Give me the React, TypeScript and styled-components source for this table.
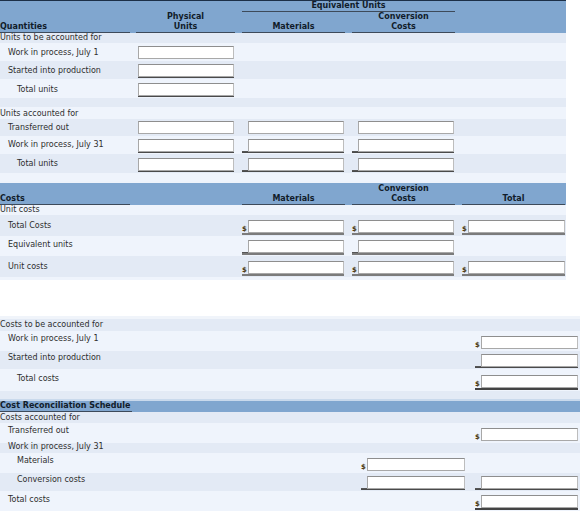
import React from "react";
import styled, { createGlobalStyle } from "styled-components";

const Global = createGlobalStyle`
  html, body { margin: 0; padding: 0; background: #ffffff; }
  body { font-family: "DejaVu Sans", Verdana, sans-serif; font-size: 8px; color: #2b2b2b; }
`;

const BLUE = "#80a6cf";
const DARK = "#e3eaf5";
const LIGHT = "#eff4fc";

const C1 = "136px 106px 110px 110px 104px";
const C3 = "359px 114px 107px";

type Tone = "dark" | "light" | "white";
const toneColor = (t: Tone) => (t === "dark" ? DARK : t === "light" ? LIGHT : "#ffffff");

const Page = styled.div`
  display: flex;
  flex-direction: column;
`;

const Section = styled.section<{ $w: number }>`
  width: ${(p) => p.$w}px;
  display: flex;
  flex-direction: column;
`;

const Strip = styled.div<{ $h: number; $c?: string }>`
  height: ${(p) => p.$h}px;
  background: ${(p) => p.$c ?? "#e6edf7"};
`;

const Head = styled.div<{ $cols: string; $rows: string; $top?: boolean }>`
  display: grid;
  grid-template-columns: ${(p) => p.$cols};
  grid-template-rows: ${(p) => p.$rows};
  background: ${BLUE};
  border-top: ${(p) => (p.$top ? "1px solid #1c2f47" : "none")};
  font-weight: bold;
  color: #111c2a;
  line-height: 10px;
`;

const HeadCell = styled.div<{ $col: string; $row?: string; $center?: boolean; $trim?: number; $line?: boolean }>`
  grid-column: ${(p) => p.$col};
  grid-row: ${(p) => p.$row ?? "auto"};
  align-self: end;
  text-align: ${(p) => (p.$center ? "center" : "left")};
  margin-right: ${(p) => p.$trim ?? 0}px;
  border-bottom: ${(p) => (p.$line === false ? "none" : "1px solid #3d4a5a")};
  white-space: nowrap;
`;

const Row = styled.div<{ $cols: string; $h: number; $tone: Tone }>`
  display: grid;
  grid-template-columns: ${(p) => p.$cols};
  height: ${(p) => p.$h}px;
  background: ${(p) => toneColor(p.$tone)};
  align-items: center;
`;

const Label = styled.div<{ $indent?: number; $lift?: number }>`
  padding-left: ${(p) => p.$indent ?? 0}px;
  line-height: 10px;
  white-space: nowrap;
  position: relative;
  top: ${(p) => -(p.$lift ?? 0)}px;
  color: #2e2e2e;
`;

type Line = "none" | "thin" | "thick" | "double";

const lineCss = (l: Line) =>
  l === "thin"
    ? "border-bottom: 1px solid #4a4a4a;"
    : l === "thick"
    ? "border-bottom: 2px solid #7b7b7b;"
    : l === "double"
    ? "border-bottom: 2px solid #444;"
    : "border-bottom: 1px solid transparent;";

const Field = styled.div<{ $pad?: number; $line: Line; $col?: string }>`
  grid-column: ${(p) => p.$col ?? "auto"};
  display: flex;
  align-items: flex-end;
  align-self: end;
  margin-bottom: 1px;
  margin-left: ${(p) => p.$pad ?? 0}px;
  width: max-content;
  ${(p) => lineCss(p.$line)}
`;

const Prefix = styled.span<{ $kind: "$" | "_" }>`
  width: 6px;
  height: 13px;
  box-sizing: border-box;
  font-size: 7px;
  font-weight: bold;
  line-height: 8px;
  color: #4d3c12;
  display: flex;
  align-items: flex-end;
  ${(p) => (p.$kind === "_" ? "border-bottom: 1px solid #555;" : "")}
`;

const Box = styled.div<{ $w: number }>`
  width: ${(p) => p.$w}px;
  height: 13px;
  box-sizing: border-box;
  background: #ffffff;
  border: 1px solid #a8a8a8;
  border-top-color: #8e8e8e;
  border-right-color: #bdbdbd;
`;

const Gap = styled.div<{ $h: number }>`
  height: ${(p) => p.$h}px;
`;

type Cell = { col: string; pre?: "$" | "_"; line?: Line; pad?: number; w?: number } | null;

const F: React.FC<{ c: NonNullable<Cell> }> = ({ c }) => (
  <Field $col={c.col} $pad={c.pad} $line={c.line ?? "none"}>
    {c.pre && <Prefix $kind={c.pre}>{c.pre === "$" ? "$" : ""}</Prefix>}
    <Box $w={c.w ?? 96} />
  </Field>
);

type RowDef = { label?: string; indent?: number; h: number; tone: Tone; cells?: Cell[]; lift?: number };

const Rows: React.FC<{ cols: string; rows: RowDef[] }> = ({ cols, rows }) => (
  <>
    {rows.map((r, i) => (
      <Row key={i} $cols={cols} $h={r.h} $tone={r.tone}>
        <Label $indent={r.indent} $lift={r.lift}>{r.label ?? ""}</Label>
        {(r.cells ?? []).map((c, j) => (c ? <F key={j} c={c} /> : null))}
      </Row>
    ))}
  </>
);

const phys = (line: Line = "none"): Cell => ({ col: "2", pad: 2, line });
const mat = (pre?: "$" | "_", line: Line = "none"): Cell => ({ col: "3", pre, line, pad: pre ? 0 : 6, w: 96 });
const conv = (pre?: "$" | "_", line: Line = "none"): Cell => ({ col: "4", pre, line, pad: pre ? 0 : 6, w: 96 });
const tot = (pre?: "$" | "_", line: Line = "none"): Cell => ({ col: "5", pre, line, w: 97 });

const sec1: RowDef[] = [
  { label: "Units to be accounted for", h: 10, tone: "dark" },
  { label: "Work in process, July 1", indent: 8, h: 18, tone: "light", cells: [phys()], lift: -1 },
  { label: "Started into production", indent: 8, h: 18, tone: "dark", cells: [phys("thin")], lift: -1 },
  { label: "Total units", indent: 17, h: 19, tone: "light", cells: [phys("thin")], lift: -1 },
  { h: 9, tone: "dark" },
  { label: "Units accounted for", h: 12, tone: "light", lift: -1 },
  { label: "Transferred out", indent: 8, h: 17, tone: "dark", cells: [phys(), mat(), conv()], lift: 0 },
  { label: "Work in process, July 31", indent: 8, h: 18, tone: "light", cells: [phys("thin"), mat("_", "thin"), conv("_", "thin")], lift: 0 },
  { label: "Total units", indent: 17, h: 19, tone: "dark", cells: [phys("thin"), mat("_", "thin"), conv("_", "thin")], lift: 0 },
  { h: 8, tone: "light" },
];

const sec2: RowDef[] = [
  { label: "Unit costs", h: 10, tone: "light", lift: 0 },
  { label: "Total Costs", indent: 8, h: 21, tone: "dark", cells: [mat("$", "thick"), conv("$", "thick"), tot("$", "thick")], lift: 0 },
  { label: "Equivalent units", indent: 8, h: 20, tone: "light", cells: [mat("_", "thick"), conv("_", "thick")], lift: 1 },
  { label: "Unit costs", indent: 8, h: 21, tone: "dark", cells: [mat("$", "thick"), conv("$", "thick"), tot("$", "thick")], lift: 0 },
  { h: 3, tone: "light" },
];

const colA = (pre?: "$" | "_", line: Line = "none"): Cell => ({ col: "2", pre, line, pad: 2, w: 98 });
const colB = (pre?: "$" | "_", line: Line = "none"): Cell => ({ col: "3", pre, line, pad: 2, w: 97 });

const sec3a: RowDef[] = [
  { label: "Costs to be accounted for", h: 12, tone: "dark" },
  { label: "Work in process, July 1", indent: 8, h: 20, tone: "light", cells: [colB("$")], lift: 2 },
  { label: "Started into production", indent: 8, h: 18, tone: "dark", cells: [colB("_", "thin")], lift: 2 },
  { label: "Total costs", indent: 17, h: 22, tone: "light", cells: [colB("$", "double")], lift: 1 },
  { h: 8, tone: "dark" },
];

const sec3b: RowDef[] = [
  { label: "Costs accounted for", h: 11, tone: "dark", lift: 0 },
  { label: "Transferred out", indent: 8, h: 20, tone: "light", cells: [colB("$")], lift: 2 },
  { label: "Work in process, July 31", indent: 8, h: 10, tone: "dark", lift: 1 },
  { label: "Materials", indent: 17, h: 20, tone: "light", cells: [colA("$")], lift: 2 },
  { label: "Conversion costs", indent: 17, h: 18, tone: "dark", cells: [colA("_", "thin"), colB("_", "thin")], lift: 2 },
  { label: "Total costs", indent: 8, h: 20, tone: "light", cells: [colB("$", "double")], lift: 1 },
];

export default function App() {
  return (
    <Page>
      <Global />
      <Section $w={566}>
        <Head $cols={C1} $rows="11px 21px" $top>
          <HeadCell $col="3 / 5" $row="1" $center $trim={7}>Equivalent Units</HeadCell>
          <HeadCell $col="1" $row="2" $trim={6}>Quantities</HeadCell>
          <HeadCell $col="2" $row="2" $center $trim={7}>Physical<br />Units</HeadCell>
          <HeadCell $col="3" $row="2" $center $trim={7}>Materials</HeadCell>
          <HeadCell $col="4" $row="2" $center $trim={7}>Conversion<br />Costs</HeadCell>
        </Head>
        <Rows cols={C1} rows={sec1} />
      </Section>
      <Section $w={566}>
        <Strip $h={2} $c="#eef3fb" />
        <Head $cols={C1} $rows="22px">
          <HeadCell $col="1" $trim={6}>Costs</HeadCell>
          <HeadCell $col="2" $line={false}></HeadCell>
          <HeadCell $col="3" $center $trim={7}>Materials</HeadCell>
          <HeadCell $col="4" $center $trim={7}>Conversion<br />Costs</HeadCell>
          <HeadCell $col="5" $center $trim={1}>Total</HeadCell>
        </Head>
        <Rows cols={C1} rows={sec2} />
      </Section>
      <Gap $h={36} />
      <Section $w={580}>
        <Strip $h={3} $c="#f0f4fa" />
        <Rows cols={C3} rows={sec3a} />
        <Strip $h={2} $c="#c9d9ec" />
        <Head $cols={C3} $rows="11px">
          <HeadCell $col="1" $trim={227}>Cost Reconciliation Schedule</HeadCell>
        </Head>
        <Rows cols={C3} rows={sec3b} />
      </Section>
    </Page>
  );
}
